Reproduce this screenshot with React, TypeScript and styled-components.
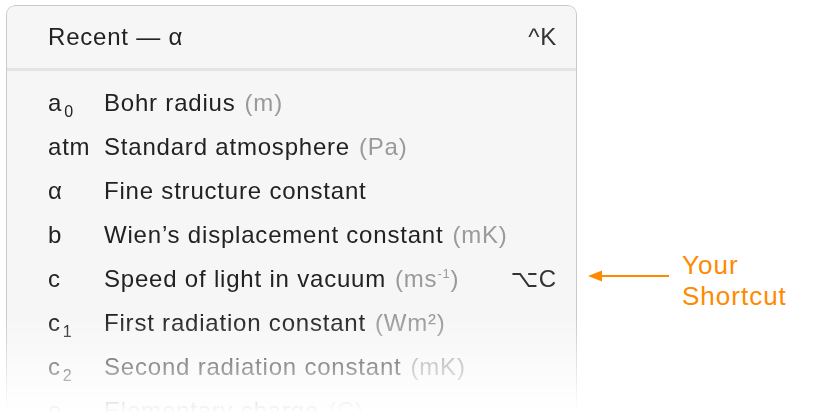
import React from 'react';
import styled, { createGlobalStyle } from 'styled-components';

const GlobalStyle = createGlobalStyle`
  html, body {
    margin: 0;
    padding: 0;
    background: #ffffff;
  }
  body {
    font-family: "Liberation Sans", "DejaVu Sans", Arial, sans-serif;
  }
`;

interface Constant {
  symbol: string;
  sub?: string;
  name: string;
  unit?: React.ReactNode;
  shortcut?: string;
}

const constants: Constant[] = [
  { symbol: 'a', sub: '0', name: 'Bohr radius', unit: 'm' },
  { symbol: 'atm', name: 'Standard atmosphere', unit: 'Pa' },
  { symbol: 'α', name: 'Fine structure constant' },
  { symbol: 'b', name: 'Wien’s displacement constant', unit: 'mK' },
  {
    symbol: 'c',
    name: 'Speed of light in vacuum',
    unit: (
      <>
        ms<sup>-1</sup>
      </>
    ),
    shortcut: '⌥C',
  },
  { symbol: 'c', sub: '1', name: 'First radiation constant', unit: 'Wm²' },
  { symbol: 'c', sub: '2', name: 'Second radiation constant', unit: 'mK' },
  { symbol: 'e', name: 'Elementary charge', unit: 'C' },
];

const Page = styled.div`
  display: flex;
  align-items: flex-start;
  padding: 5px 0 0 6px;
  height: 415px;
  overflow: hidden;
`;

const Panel = styled.div`
  width: 569px;
  height: 470px;
  flex-shrink: 0;
  background: #f6f6f6;
  border: 1px solid #c9c9c9;
  border-radius: 9px;
  box-shadow: 0 0 2px rgba(0, 0, 0, 0.08);
  -webkit-mask-image: linear-gradient(to bottom, #000 312px, transparent 408px);
  mask-image: linear-gradient(to bottom, #000 312px, transparent 408px);
`;

const Header = styled.div`
  display: flex;
  align-items: center;
  justify-content: space-between;
  height: 62px;
  padding: 0 19px 0 41px;
  border-bottom: 3px solid #e4e4e4;
  font-size: 24px;
  letter-spacing: 0.8px;
  color: #222;
`;

const Key = styled.span`
  color: #333;
  font-size: 24px;
  letter-spacing: 0.8px;
`;

const List = styled.div`
  display: flex;
  flex-direction: column;
  padding-top: 10px;
`;

const Row = styled.div`
  display: flex;
  align-items: center;
  height: 44px;
  padding: 0 19px 0 41px;
  font-size: 24px;
  letter-spacing: 0.8px;
  color: #222;
`;

const Symbol = styled.span`
  width: 56px;
  flex-shrink: 0;
  white-space: nowrap;

  sub {
    font-size: 16px;
    margin-left: 2px;
    vertical-align: -6px;
    line-height: 0;
  }
`;

const Name = styled.span`
  flex: 1;
  white-space: nowrap;
`;

const Unit = styled.span`
  color: #9a9a9a;
  margin-left: 9px;

  sup {
    font-size: 13px;
    vertical-align: 9px;
    line-height: 0;
  }
`;

const Callout = styled.div`
  display: flex;
  align-items: center;
  gap: 12px;
  margin: 235px 0 0 11px;
`;

const Label = styled.div`
  color: #ff8a00;
  font-size: 26px;
  letter-spacing: 1px;
  line-height: 31px;
  margin-top: 10px;
`;

const Arrow = () => (
  <svg width="82" height="14" viewBox="0 0 82 14">
    <line x1="8" y1="7" x2="81" y2="7" stroke="#ff8a00" strokeWidth="2" />
    <polygon points="0,7 14,1.5 14,12.5" fill="#ff8a00" />
  </svg>
);

export default function App() {
  return (
    <>
      <GlobalStyle />
      <Page>
        <Panel>
          <Header>
            <span>Recent — α</span>
            <Key>^K</Key>
          </Header>
          <List>
            {constants.map((c, i) => (
              <Row key={i}>
                <Symbol>
                  {c.symbol}
                  {c.sub && <sub>{c.sub}</sub>}
                </Symbol>
                <Name>
                  {c.name}
                  {c.unit && <Unit>({c.unit})</Unit>}
                </Name>
                {c.shortcut && <Key>{c.shortcut}</Key>}
              </Row>
            ))}
          </List>
        </Panel>
        <Callout>
          <Arrow />
          <Label>
            Your
            <br />
            Shortcut
          </Label>
        </Callout>
      </Page>
    </>
  );
}
